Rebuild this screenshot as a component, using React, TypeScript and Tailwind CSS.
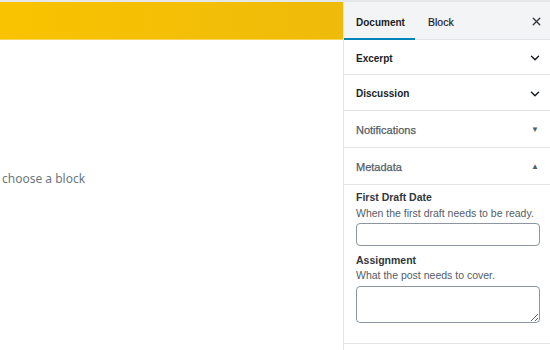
import { X, ChevronDown } from 'lucide-react';

const Row = ({ title, dark, icon, h }: { title: string; dark?: boolean; icon: 'chev' | 'down' | 'up'; h: string }) => (
    <div className={`${h} shrink-0 flex items-center justify-between pt-[2px] pl-[12px] pr-[8px] border-b border-[#e2e4e7]`}>
        <span className={dark ? 'text-[10px] font-bold text-[#191e23]' : 'text-[11px] text-[#555d66]'} style={dark ? undefined : { WebkitTextStroke: '0.25px #555d66' }}>{title}</span>
        {icon === 'chev' && <ChevronDown size={14} strokeWidth={2.5} className="text-[#191e23]" />}
        {icon === 'down' && <span className="text-[8px] text-[#555d66] mr-[3px]">▼</span>}
        {icon === 'up' && <span className="text-[8px] text-[#555d66] mr-[3px]">▲</span>}
    </div>
);

export default function App() {
    return (
        <div className="w-[550px] h-[350px] flex bg-white overflow-hidden" style={{ fontFamily: '"Liberation Sans", Arial, sans-serif' }}>
            {/* Editor canvas */}
            <div className="flex-1 flex flex-col border-t-[2px] border-[#e6e7e9]">
                <div className="h-[38px] shrink-0 bg-gradient-to-r from-[#f9c300] to-[#efbb0a] border-b border-[#f7d65a]" />
                <div className="pt-[126px] pl-[2px]">
                    <span className="text-[12px] text-[#6c7781]" style={{ fontFamily: '"Noto Sans", sans-serif' }}>choose a block</span>
                </div>
            </div>

            {/* Sidebar */}
            <div className="w-[207px] shrink-0 border-l border-[#e2e4e7] flex flex-col">
                <div className="h-[40px] shrink-0 bg-[#f3f4f5] border-t-[2px] border-[#e6e7e9] border-b border-b-[#e2e4e7] flex items-stretch">
                    <div className="w-[71px] flex items-center pt-[5px] pl-[12px] border-b-[2px] border-[#0085ba] mb-[-1px] text-[10px] font-bold text-[#191e23]">Document</div>
                    <div className="flex items-center pt-[5px] pl-[13px] text-[10.5px] text-[#191e23]" style={{ WebkitTextStroke: '0.2px #191e23' }}>Block</div>
                    <div className="flex-1 flex items-center justify-end pt-[2px] pr-[7px]">
                        <X size={13} strokeWidth={2.5} className="text-[#32373c]" />
                    </div>
                </div>
                <Row title="Excerpt" dark icon="chev" h="h-[35px]" />
                <Row title="Discussion" dark icon="chev" h="h-[36px]" />
                <Row title="Notifications" icon="down" h="h-[37px]" />
                <Row title="Metadata" icon="up" h="h-[37px]" />
                <div className="shrink-0 px-[12px] pt-[5px] pb-[20px] border-b border-[#e2e4e7]">
                    <div className="text-[10.5px] leading-[14px] font-bold text-[#32373c]">First Draft Date</div>
                    <div className="text-[10.5px] leading-[14px] text-[#555d66] mt-[2px] whitespace-nowrap">When the first draft needs to be ready.</div>
                    <input className="block mt-[3px] w-[184px] h-[23px] border border-[#8d96a0] rounded-[4px]" />
                    <div className="text-[10.5px] leading-[14px] font-bold text-[#32373c] mt-[7px]">Assignment</div>
                    <div className="text-[10.5px] leading-[14px] text-[#555d66] mt-[1px]">What the post needs to cover.</div>
                    <textarea className="block mt-[4px] w-[184px] h-[37px] border border-[#8d96a0] rounded-[4px]" />
                </div>
            </div>
        </div>
    );
}
